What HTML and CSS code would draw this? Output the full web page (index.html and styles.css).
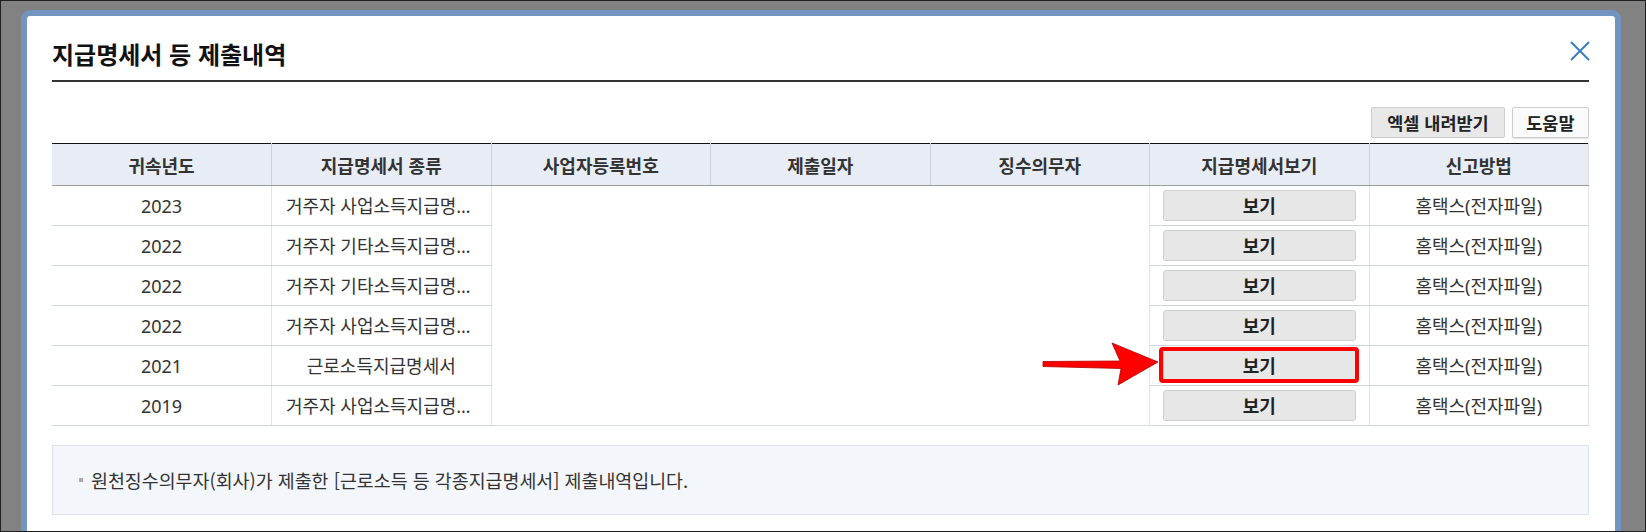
FILE: index.html
```html
<!DOCTYPE html>
<html lang="ko">
<head>
<meta charset="utf-8">
<title>지급명세서 등 제출내역</title>
<link rel="stylesheet" href="styles.css">
</head>
<body>
<div class="screen">
  <div class="frame">
    <div class="dialog">
      <div class="dlg-head">
        <h1 class="dlg-title">지급명세서 등 제출내역</h1>
        <button class="close" type="button" aria-label="닫기">
          <svg width="20" height="20" viewBox="0 0 20 20"><path d="M1 1 L19 19 M19 1 L1 19" stroke="#3b7dc2" stroke-width="2" fill="none"/></svg>
        </button>
      </div>
      <div class="toolbar">
        <button class="tbtn tbtn-excel" type="button">엑셀 내려받기</button>
        <button class="tbtn tbtn-help" type="button">도움말</button>
      </div>
      <table class="grid">
        <thead>
          <tr>
            <th>귀속년도</th>
            <th>지급명세서 종류</th>
            <th>사업자등록번호</th>
            <th>제출일자</th>
            <th>징수의무자</th>
            <th>지급명세서보기</th>
            <th>신고방법</th>
          </tr>
        </thead>
        <tbody>
          <tr>
            <td>2023</td>
            <td class="kind">거주자 사업소득지급명세서</td>
            <td class="masked" colspan="3" rowspan="6"></td>
            <td class="act"><button class="view" type="button">보기</button></td>
            <td>홈택스(전자파일)</td>
          </tr>
          <tr>
            <td>2022</td>
            <td class="kind">거주자 기타소득지급명세서</td>
            <td class="act"><button class="view" type="button">보기</button></td>
            <td>홈택스(전자파일)</td>
          </tr>
          <tr>
            <td>2022</td>
            <td class="kind">거주자 기타소득지급명세서</td>
            <td class="act"><button class="view" type="button">보기</button></td>
            <td>홈택스(전자파일)</td>
          </tr>
          <tr>
            <td>2022</td>
            <td class="kind">거주자 사업소득지급명세서</td>
            <td class="act"><button class="view" type="button">보기</button></td>
            <td>홈택스(전자파일)</td>
          </tr>
          <tr>
            <td>2021</td>
            <td class="kind">근로소득지급명세서</td>
            <td class="act"><span class="hl"><button class="view" type="button">보기</button></span></td>
            <td>홈택스(전자파일)</td>
          </tr>
          <tr>
            <td>2019</td>
            <td class="kind">거주자 사업소득지급명세서</td>
            <td class="act"><button class="view" type="button">보기</button></td>
            <td>홈택스(전자파일)</td>
          </tr>
        </tbody>
      </table>
      <div class="note"><span class="bullet"></span>원천징수의무자(회사)가 제출한 [근로소득 등 각종지급명세서] 제출내역입니다.</div>
    </div>
  </div>
  <svg class="arrow" width="140" height="55" viewBox="0 0 140 55">
    <polygon points="13,26.5 90,26 82,8 128,27 88,50 91,33.5 13,31.5" fill="#ff0000" stroke="#b00000" stroke-width="0.8" stroke-linejoin="miter"/>
  </svg>
</div>
</body>
</html>
```

FILE: styles.css
```css
body {
  margin: 0;
  font-family: "Noto Sans CJK KR", "Noto Sans", sans-serif;
}

.screen {
  position: relative;
  width: 1646px;
  height: 532px;
  box-sizing: border-box;
  border: 1px solid #1f1f1f;
  background: #828282;
  overflow: hidden;
  padding: 9px 0 0 20px;
}

.frame {
  width: 1600px;
  height: 560px;
  box-sizing: border-box;
  border: 6px solid #7394bf;
  border-bottom: 0;
  border-radius: 9px 9px 0 0;
  background: #fff;
}

.dialog {
  padding: 0 26px 0 25px;
}

.dlg-head {
  display: flex;
  align-items: flex-start;
  justify-content: space-between;
  padding-top: 22px;
  padding-bottom: 10px;
  border-bottom: 2px solid #333;
}

.dlg-title {
  margin: 0;
  font-size: 24px;
  line-height: 32px;
  font-weight: 700;
  color: #111;
}

.close {
  display: block;
  margin: 3px -1px 0 0;
  width: 20px;
  height: 20px;
  padding: 0;
  border: 0;
  background: none;
}

.close svg {
  display: block;
}

.toolbar {
  display: flex;
  justify-content: flex-end;
  gap: 7px;
  margin-top: 25px;
  margin-bottom: 5px;
}

.tbtn {
  height: 31px;
  box-sizing: border-box;
  font-family: "Noto Sans CJK KR", "Noto Sans", sans-serif;
  font-size: 17.5px;
  font-weight: 700;
  line-height: 29px;
  color: #222;
  border: 1px solid #cdcdcd;
  border-radius: 2px;
  padding: 0 15px;
}

.tbtn-excel {
  background: #e8e8e8;
}

.tbtn-help {
  background: #fafafa;
  padding: 0 13.5px;
  box-shadow: 0 1px 1px rgba(0, 0, 0, 0.12);
}

.grid {
  width: 100%;
  table-layout: fixed;
  border-collapse: collapse;
  border-top: 1px solid #111;
}

.grid th {
  height: 41px;
  padding: 0;
  background: #e8edf5;
  font-size: 18px;
  font-weight: 700;
  line-height: 1;
  color: #333;
  border-bottom: 1px solid #9c9c9c;
  border-right: 1px solid #cbd3df;
}

.grid th:last-child {
  border-right: 1px solid #d9dee6;
}

.grid td {
  height: 39px;
  padding: 0 14px;
  font-family: "Noto Sans", "Noto Sans CJK KR", sans-serif;
  font-size: 18px;
  line-height: 1;
  color: #333;
  text-align: center;
  border-bottom: 1px solid #cdd5e0;
  border-right: 1px solid #e1e5eb;
  white-space: nowrap;
  overflow: hidden;
  text-overflow: ellipsis;
}

.grid td.masked {
  border-bottom: 1px solid #d8dde3;
}

.grid td.act {
  padding: 0 13px;
  overflow: visible;
}

.view {
  display: block;
  width: 100%;
  height: 31px;
  box-sizing: border-box;
  padding: 0;
  font-family: "Noto Sans CJK KR", "Noto Sans", sans-serif;
  font-size: 18px;
  font-weight: 700;
  line-height: 29px;
  color: #222;
  background: #e8e7e7;
  border: 1px solid #cfcfcf;
  border-radius: 3px;
}

.hl {
  position: relative;
  display: block;
}

.hl::after {
  content: "";
  position: absolute;
  top: -3px;
  right: -3px;
  bottom: -2px;
  left: -4px;
  border: 4px solid #f00;
  border-radius: 4px;
}

.note {
  margin-top: 19px;
  height: 70px;
  box-sizing: border-box;
  border: 1px solid #dde3ec;
  background: #f3f6fb;
  display: flex;
  align-items: center;
  padding-left: 26px;
  font-size: 18.4px;
  color: #333;
}

.bullet {
  width: 4px;
  height: 4px;
  background: #aaa;
  margin-right: 8px;
}

.arrow {
  position: absolute;
  left: 1029px;
  top: 334px;
}
```
